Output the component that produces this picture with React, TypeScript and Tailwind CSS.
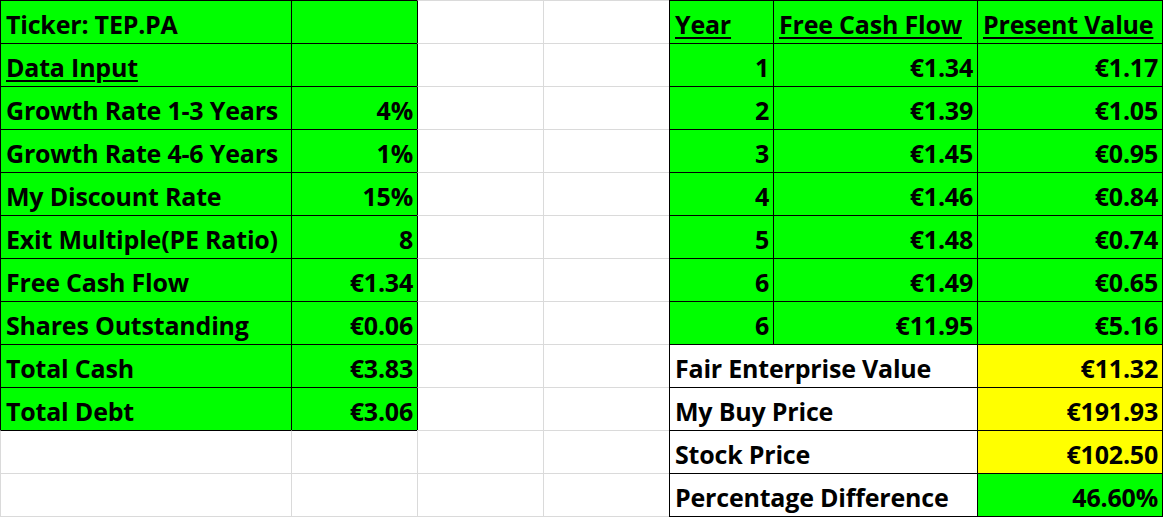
import React from "react";

type Cell = {
  col: number;
  span?: number;
  text?: string;
  right?: boolean;
  underline?: boolean;
  bg?: "green" | "yellow" | "white";
};

const COLS = 7;
const ROWS = 12;

// which grid slots sit inside a black-bordered box
const boxed = (r: number, c: number) => {
  if (r < 0 || c < 0 || r >= ROWS || c >= COLS) return false;
  if (c <= 1) return r <= 9;
  if (c >= 4) return true;
  return false;
};

const leftRows: [string, string, boolean?][] = [
  ["Ticker: TEP.PA", ""],
  ["Data Input", "", true],
  ["Growth Rate 1-3 Years", "4%"],
  ["Growth Rate 4-6 Years", "1%"],
  ["My Discount Rate", "15%"],
  ["Exit Multiple(PE Ratio)", "8"],
  ["Free Cash Flow", "€1.34"],
  ["Shares Outstanding", "€0.06"],
  ["Total Cash", "€3.83"],
  ["Total Debt", "€3.06"],
];

const cashFlows = [
  ["1", "€1.34", "€1.17"],
  ["2", "€1.39", "€1.05"],
  ["3", "€1.45", "€0.95"],
  ["4", "€1.46", "€0.84"],
  ["5", "€1.48", "€0.74"],
  ["6", "€1.49", "€0.65"],
  ["6", "€11.95", "€5.16"],
];

const summary: [string, string, "yellow" | "green"][] = [
  ["Fair Enterprise Value", "€11.32", "yellow"],
  ["My Buy Price", "€191.93", "yellow"],
  ["Stock Price", "€102.50", "yellow"],
  ["Percentage Difference", "46.60%", "green"],
];

function buildRows(): Cell[][] {
  const rows: Cell[][] = [];
  for (let r = 0; r < ROWS; r++) {
    const row: Cell[] = [];
    const left = leftRows[r];
    if (left) {
      row.push({ col: 0, text: left[0], underline: left[2], bg: "green" });
      row.push({ col: 1, text: left[1], right: true, bg: "green" });
    } else {
      row.push({ col: 0 }, { col: 1 });
    }
    row.push({ col: 2 }, { col: 3 });
    if (r === 0) {
      row.push({ col: 4, text: "Year", underline: true, bg: "green" });
      row.push({ col: 5, text: "Free Cash Flow", underline: true, bg: "green" });
      row.push({ col: 6, text: "Present Value", underline: true, bg: "green" });
    } else if (r <= 7) {
      const [y, f, p] = cashFlows[r - 1];
      row.push({ col: 4, text: y, right: true, bg: "green" });
      row.push({ col: 5, text: f, right: true, bg: "green" });
      row.push({ col: 6, text: p, right: true, bg: "green" });
    } else {
      const [label, val, bg] = summary[r - 8];
      row.push({ col: 4, span: 2, text: label, bg: "white" });
      row.push({ col: 6, text: val, right: true, bg });
    }
    rows.push(row);
  }
  return rows;
}

const bgClass = {
  green: "bg-[#00ff00]",
  yellow: "bg-[#ffff00]",
  white: "bg-white",
};

export default function App() {
  const rows = buildRows();

  return (
    <div className="w-[1163px] h-[517px] bg-white overflow-hidden font-['Open_Sans','Lato',sans-serif] font-bold text-black">
      <div className="grid grid-cols-[291px_126px_126px_126px_104px_204px_186px] grid-rows-[repeat(11,43px)_44px]">
        {rows.map((row, r) =>
          row.map((cell) => {
            const c = cell.col;
            const span = cell.span ?? 1;
            const topBlack = boxed(r, c) || boxed(r - 1, c);
            const leftBlack = boxed(r, c) || boxed(r, c - 1);
            const last = r === ROWS - 1;
            const lastCol = c + span === COLS;
            return (
              <div
                key={`${r}-${c}`}
                className={[
                  "flex items-end pl-[5px] pr-[4px] pb-[6px] text-[25px] tracking-[-0.2px] leading-none whitespace-nowrap border-t border-l",
                  span === 2 ? "col-span-2" : "",
                  topBlack ? "border-t-black" : "border-t-[#dadada]",
                  leftBlack ? "border-l-black" : "border-l-[#dadada]",
                  last ? "border-b" : "",
                  last && boxed(r, c) ? "border-b-black" : "",
                  last && !boxed(r, c) ? "border-b-[#dadada]" : "",
                  lastCol ? "border-r border-r-black" : "",
                  cell.right ? "justify-end" : "",
                  cell.bg ? bgClass[cell.bg] : "bg-white",
                ].join(" ")}
              >
                {cell.text ? (
                  <span className={cell.underline ? "underline decoration-[1.5px] underline-offset-[3px]" : ""}>
                    {cell.text}
                  </span>
                ) : null}
              </div>
            );
          })
        )}
      </div>
    </div>
  );
}
